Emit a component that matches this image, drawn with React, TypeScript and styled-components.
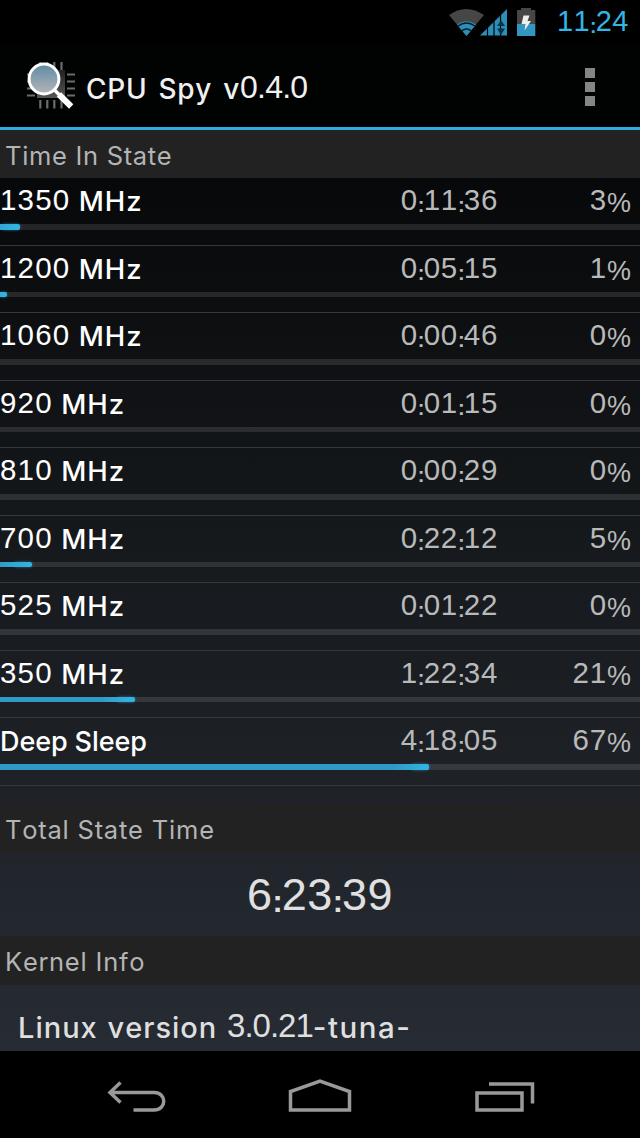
import React from 'react';
import styled, { createGlobalStyle } from 'styled-components';

const GlobalStyle = createGlobalStyle`
  * { box-sizing: border-box; }
  body { margin: 0; background: #000; }
`;

const Screen = styled.div`
  display: flex;
  flex-direction: column;
  width: 640px;
  height: 1138px;
  overflow: hidden;
  background: #000;
  color: #fff;
  font-family: Inter, 'Liberation Sans', sans-serif;
  font-size: 27px;
  font-kerning: none;
  white-space: nowrap;
`;

const StatusBar = styled.div`
  display: flex;
  flex: none;
  justify-content: flex-end;
  height: 44px;
  padding-right: 10px;
  color: #33b5e5;
`;

const StatusIcons = styled.svg`
  flex: none;
  width: 90px;
  height: 30px;
  margin: 7px 19px 0 0;
`;

const Clock = styled.div`
  width: 73px;
  line-height: 46px;
`;

const AppBody = styled.div`
  display: flex;
  flex-direction: column;
  flex: none;
  height: 1007px;
  background: linear-gradient(#000 0%, #08090b 15%, #14171a 45%, #1d2126 70%, #272c34 100%);
`;

const ActionBar = styled.div`
  display: flex;
  flex: none;
  align-items: center;
  height: 86px;
  padding: 0 45px 0 26px;
  background: #010202;
  border-bottom: 3px solid #2fade0;
`;

const AppIcon = styled.svg`
  width: 50px;
  height: 50px;
  margin-right: 10px;
`;

const Title = styled.div`
  flex: 1;
  font-size: 28px;
  line-height: 80px;
  padding-top: 7px;
  color: #f0f0f0;
`;

const Overflow = styled.div`
  display: flex;
  flex-direction: column;
  gap: 4px;
  padding-top: 3px;
`;

const Dot = styled.i`
  width: 10px;
  height: 10px;
  background: #858585;
`;

const Section = styled.div<{ $h: number }>`
  flex: none;
  height: ${(p) => p.$h}px;
  padding-left: 5px;
  line-height: ${(p) => p.$h + 3}px;
  background: #222;
  color: #b4b4b4;
`;

const States = styled.div`
  flex: none;
  height: 625px;
`;

const StateRow = styled.div`
  height: 67.5px;
  border-bottom: 1px solid #36393c;
`;

const StateText = styled.div`
  display: grid;
  grid-template-columns: 300px 198px 133px;
  height: 46px;
  padding-top: 2px;
  line-height: 44px;
`;

const Value = styled.div`
  text-align: right;
  color: #b9b9b9;
`;

const Track = styled.div`
  height: 5.5px;
  background: rgba(255, 255, 255, 0.11);
`;

const Fill = styled.div`
  height: 5.5px;
  border-radius: 0 2px 2px 0;
  background: linear-gradient(to left, #33b5e5, #309ac6 34px);
  position: relative;

  &::after {
    content: '';
    position: absolute;
    right: 0;
    top: 0;
    width: min(100%, 18px);
    height: 5.5px;
    border-radius: 3px;
    box-shadow: 0 0 3px rgba(51, 181, 229, 0.6);
  }
`;

const Total = styled.div`
  flex: none;
  height: 83px;
  font-size: 45px;
  line-height: 84px;
  text-align: center;
  color: #e0e0e0;
`;

const Kernel = styled.div`
  flex: 1;
  padding-left: 18px;
  font-size: 29px;
  line-height: 85px;
  color: #dfdfdf;
  overflow: hidden;
`;

const NavBar = styled.div`
  flex: none;
  height: 87px;
  background: #000;
`;

const Words = styled.span<{ $size: number; $track?: number; $weight?: number; $gap?: number }>`
  font-size: ${(p) => p.$size}px;
  font-weight: ${(p) => p.$weight ?? 500};
  letter-spacing: ${(p) => p.$track ?? 0}px;
  word-spacing: ${(p) => p.$gap ?? 0}px;
  line-height: 0;
`;

const Digits = styled.span<{ $size: number; $track?: number }>`
  font-family: 'Liberation Sans', Arial, sans-serif;
  font-size: ${(p) => p.$size}px;
  letter-spacing: ${(p) => p.$track ?? 1.2}px;
  line-height: 0;
  vertical-align: 1px;
`;

const Colon = styled.span`
  font-size: 0.68em;
  font-weight: 700;
  letter-spacing: -0.8px;
  vertical-align: -2px;
`;

const Percent = styled.span`
  font-family: 'Liberation Sans', Arial, sans-serif;
  font-size: 27px;
  line-height: 0;
  vertical-align: -1px;
`;

function Time({ value, size, track }: { value: string; size: number; track?: number }) {
  return (
    <Digits $size={size} $track={track}>
      {value.split(/(:)/).map((part, i) => (part === ':' ? <Colon key={i}>:</Colon> : part))}
    </Digits>
  );
}

const states = [
  { mhz: '1350', time: '0:11:36', pct: 3, fill: 19.5 },
  { mhz: '1200', time: '0:05:15', pct: 1, fill: 7 },
  { mhz: '1060', time: '0:00:46', pct: 0, fill: 0 },
  { mhz: '920', time: '0:01:15', pct: 0, fill: 0 },
  { mhz: '810', time: '0:00:29', pct: 0, fill: 0 },
  { mhz: '700', time: '0:22:12', pct: 5, fill: 32 },
  { mhz: '525', time: '0:01:22', pct: 0, fill: 0 },
  { mhz: '350', time: '1:22:34', pct: 21, fill: 135 },
  { mhz: null, time: '4:18:05', pct: 67, fill: 429 },
];

function SignalIcons() {
  return (
    <StatusIcons viewBox="448 7 90 30">
      <path d="M449 15Q466 3 484 15L466.500 36Z" fill="#464646" />
      <path d="M457 24.500Q466.500 18 476 24.500L466.500 36Z" fill="#2b8fb9" />
      <path d="M458 26Q466.500 20 475 26M461.500 31Q466.500 27 471.500 31" fill="none" stroke="#061820" strokeWidth="1.300" />
      <path d="M480 35.500L507 9V35.500Z" fill="#2b8fb9" />
      <path d="M487.500 24V36M494 19V36M500.500 13V36" stroke="#000" strokeWidth="1.200" />
      <path d="M497 28.500L501 35L505 28.500ZM497 26L501 20L505 26Z" fill="#0b3345" />
      <path d="M517 10H521V8H531V10H535.300V24H517Z" fill="#464646" />
      <path d="M517 24H535.300V36H517Z" fill="#3396c0" />
      <path d="M523.500 15.500H529.500L527.500 21H531L524.500 30.500L525.500 24H521.500Z" fill="#eee" />
    </StatusIcons>
  );
}

function SpyIcon() {
  return (
    <AppIcon viewBox="26 62 50 50">
      <defs>
        <linearGradient id="lens" x1="0" y1="0" x2="0" y2="1">
          <stop offset="0" stopColor="#5d8ba4" />
          <stop offset="1" stopColor="#b5b5b9" />
        </linearGradient>
        <linearGradient id="chip" x1="0" y1="0" x2="0" y2="1">
          <stop offset="0" stopColor="#222" />
          <stop offset="1" stopColor="#555" />
        </linearGradient>
      </defs>
      <rect x="37" y="71" width="28" height="28" fill="url(#chip)" />
      <path
        d="M40.300 101V109.500M47.300 101V109.500M54.300 101V109.500M61.500 101V109.500M40.300 63V70M47.300 63V70M54.300 63V71M61.500 63V71M67 75.500H75M67 82.500H75M67 89.500H75M67 96.500H75M27 75.500H35M27 82.500H35M27 89.500H35M27 96.500H35"
        stroke="#6c6c6c"
        strokeWidth="2.200"
      />
      <path d="M54.500 91L61 97.500" stroke="#fff" strokeWidth="3.500" />
      <path d="M59 95.500L71.200 107.500" stroke="#fff" strokeWidth="6" />
      <circle cx="44" cy="80" r="14.900" fill="url(#lens)" stroke="#fff" strokeWidth="3" />
    </AppIcon>
  );
}

export default function App() {
  return (
    <Screen>
      <GlobalStyle />
      <StatusBar>
        <SignalIcons />
        <Clock>
          <Time value="11:24" size={29} track={0.4} />
        </Clock>
      </StatusBar>
      <AppBody>
        <ActionBar>
          <SpyIcon />
          <Title>
            <Words $size={28} $track={0.7} $gap={3}>CPU Spy v</Words>
            <Digits $size={32} $track={-0.8}>0.4.0</Digits>
          </Title>
          <Overflow>
            <Dot />
            <Dot />
            <Dot />
          </Overflow>
        </ActionBar>
        <Section $h={48}>
          <Words $size={25.5} $weight={400} $track={0.7}>Time In State</Words>
        </Section>
        <States>
          {states.map((s) => (
            <StateRow key={s.time}>
              <StateText>
                <div>
                  {s.mhz ? (
                    <>
                      <Digits $size={29.5}>{s.mhz}</Digits>
                      <Words $size={27.5} $track={1}> MHz</Words>
                    </>
                  ) : (
                    <Words $size={27} $track={-0.1}>Deep Sleep</Words>
                  )}
                </div>
                <Value>
                  <Time value={s.time} size={29.5} track={0.7} />
                </Value>
                <Value>
                  <Digits $size={29.5} $track={0.8}>{s.pct}</Digits>
                  <Percent>%</Percent>
                </Value>
              </StateText>
              <Track>{s.fill > 0 && <Fill style={{ width: s.fill }} />}</Track>
            </StateRow>
          ))}
        </States>
        <Section $h={50}>
          <Words $size={25.5} $weight={400} $track={0.8}>Total State Time</Words>
        </Section>
        <Total>
          <Time value="6:23:39" size={45} track={0.4} />
        </Total>
        <Section $h={49}>
          <Words $size={25.5} $weight={400} $track={0.8}>Kernel Info</Words>
        </Section>
        <Kernel>
          <Words $size={29} $track={1} $gap={1}>Linux version </Words>
          <Digits $size={33} $track={-1}>3.0.21</Digits>
          <Words $size={29.5} $track={1.5}>-tuna-</Words>
        </Kernel>
      </AppBody>
      <NavBar>
        <svg width="640" height="87" viewBox="0 1051 640 87" fill="none" stroke="#999" strokeWidth="3.500">
          <path d="M120.500 1082.500L110 1092.500L120.500 1102.500M110 1092.500H154C167 1092.500 167 1110 154 1110H133.500" />
          <path d="M290.500 1110V1091.500L320 1081L349.500 1091.500V1110Z" />
          <path d="M477 1093H522V1110H477ZM489 1084H532.500V1103.500" />
        </svg>
      </NavBar>
    </Screen>
  );
}
